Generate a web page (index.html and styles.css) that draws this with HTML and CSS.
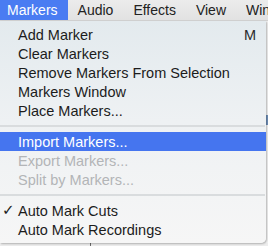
FILE: index.html
```html
<!DOCTYPE html>
<html lang="en">
<head>
    <meta charset="UTF-8">
    <title>Markers menu</title>
    <link rel="stylesheet" href="styles.css">
</head>
<body>

    <div class="menubar">
        <div class="bar-item active">Markers</div>
        <div class="bar-item">Audio</div>
        <div class="bar-item">Effects</div>
        <div class="bar-item">View</div>
        <div class="bar-item">Window</div>
    </div>

    <div class="stage">
        <div class="menu">
            <div class="item"><span class="label">Add Marker</span><span class="key">M</span></div>
            <div class="item"><span class="label">Clear Markers</span></div>
            <div class="item"><span class="label">Remove Markers From Selection</span></div>
            <div class="item"><span class="label">Markers Window</span></div>
            <div class="item"><span class="label">Place Markers...</span></div>
            <div class="separator"></div>
            <div class="item selected"><span class="label">Import Markers...</span></div>
            <div class="item disabled"><span class="label">Export Markers...</span></div>
            <div class="item disabled"><span class="label">Split by Markers...</span></div>
            <div class="separator"></div>
            <div class="item"><span class="check">✓</span><span class="label">Auto Mark Cuts</span></div>
            <div class="item"><span class="label">Auto Mark Recordings</span></div>
        </div>
        <div class="gutter">
            <div class="gutter-mark"></div>
        </div>
    </div>

    <div class="below">
        <div class="below-line"></div>
    </div>

</body>
</html>
```

FILE: styles.css
```css
/* Base */
body {
    margin: 0;
    width: 268px;
    height: 246px;
    overflow: hidden;
    background-color: #ededed;
    font-family: "Liberation Sans", Arial, sans-serif;
    color: #1c1c1c;
}

/* Top menu bar */
.menubar {
    display: flex;
    height: 20px;
    background: linear-gradient(#ececec, #e2e2e2);
    border-bottom: 1px solid #d2d2d2;
    white-space: nowrap;
    overflow: hidden;
}

.bar-item {
    flex: none;
    padding: 0 10px;
    font-size: 14px;
    line-height: 20px;
    color: #222;
}

.bar-item.active {
    padding-left: 7px;
    background-color: #4a7cf2;
    color: #fff;
}

/* Dropdown */
.stage {
    display: flex;
}

.menu {
    width: 266px;
    padding: 4px 0;
    background: linear-gradient(#e3eaee, #eef1f3 45%, #f6f6f6);
    border-radius: 0 0 5px 0;
    box-shadow: 1px 1px 2px rgba(0, 0, 0, 0.25);
    position: relative;
    z-index: 1;
}

.item {
    display: flex;
    align-items: center;
    height: 19px;
    padding: 0 10px 0 18px;
    font-size: 14.5px;
    position: relative;
}

.label {
    flex: 1;
}

.key {
    color: #2a2a2a;
}

.check {
    position: absolute;
    left: 2px;
    top: 0;
    font-family: "DejaVu Sans", sans-serif;
    font-size: 15px;
    font-weight: bold;
    line-height: 19px;
}

.item.selected {
    background-color: #4575ef;
    color: #fff;
}

.item.disabled {
    color: #b3b5b7;
}

.separator {
    height: 12px;
    display: flex;
    align-items: center;
}

.separator::before {
    content: "";
    flex: 1;
    height: 2px;
    margin-right: 1px;
    background-color: #d9dcde;
}

/* Bits of the window behind the menu */
.gutter {
    width: 2px;
    padding-top: 94px;
    background-color: #f2f2f2;
}

.gutter-mark {
    height: 10px;
    background-color: #6f8fb7;
}

.below {
    height: 3px;
    padding-left: 90px;
}

.below-line {
    width: 1px;
    height: 3px;
    background-color: #6d6d6d;
}
```
